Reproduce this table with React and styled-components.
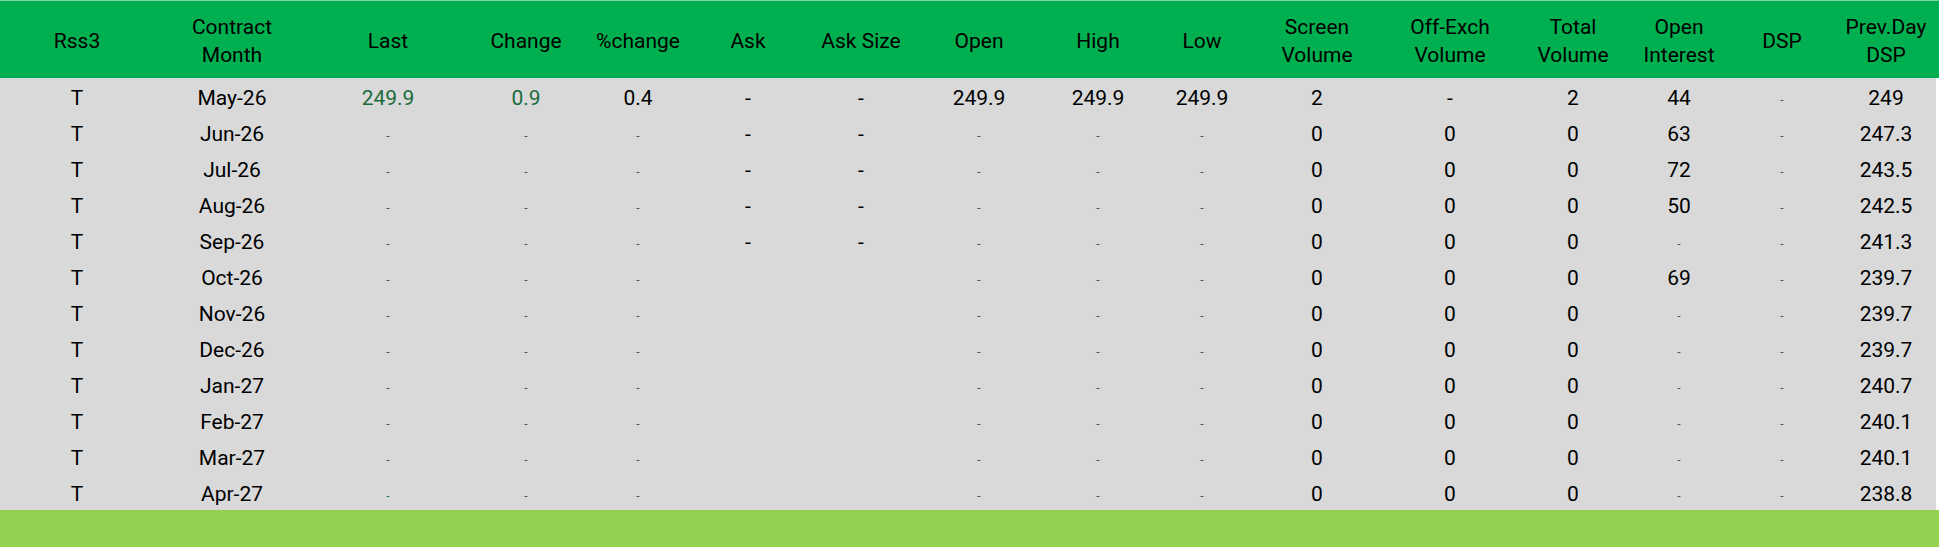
import React from "react";
import styled, { createGlobalStyle } from "styled-components";

const GlobalStyle = createGlobalStyle`
	html, body {
		margin: 0;
		padding: 0;
		background: #ffffff;
	}
	body {
		font-family: Roboto, "Liberation Sans", sans-serif;
		color: #000;
	}
`;

const COLS = "154px 156px 156px 120px 104px 116px 110px 126px 112px 96px 134px 132px 114px 98px 108px 100px";

const Page = styled.div`
	width: 1939px;
	height: 547px;
	display: flex;
	flex-direction: column;
	overflow: hidden;
`;

const Header = styled.div`
	display: grid;
	grid-template-columns: ${COLS} 1fr;
	height: 78px;
	background: #00b050;
	border-top: 1px solid #7fd6a5;
	box-sizing: border-box;
`;

const HeadCell = styled.div`
	display: flex;
	align-items: center;
	justify-content: center;
	text-align: center;
	font-size: 21px;
	line-height: 28px;
	white-space: pre-line;
	padding-top: 2px;
`;

const Body = styled.div`
	width: 1936px;
	background: #d9d9d9;
`;

const Row = styled.div`
	display: grid;
	grid-template-columns: ${COLS};
	height: 36px;
`;

const Cell = styled.div`
	display: flex;
	align-items: center;
	justify-content: center;
	font-size: 21px;
	padding-top: 3px;
	color: ${(p) => (p.$green ? "#1b6b3c" : "#000")};
`;

const Dot = styled.span`
	font-size: 12px;
	line-height: 1;
	padding-top: 4px;
	color: ${(p) => (p.$green ? "#2f7a4a" : "#555")};
`;

const Footer = styled.div`
	flex: 1;
	background: #92d050;
`;

const headers = [
	"Rss3",
	"Contract\nMonth",
	"Last",
	"Change",
	"%change",
	"Ask",
	"Ask Size",
	"Open",
	"High",
	"Low",
	"Screen\nVolume",
	"Off-Exch\nVolume",
	"Total\nVolume",
	"Open\nInterest",
	"DSP",
	"Prev.Day\nDSP",
];

// "." = small grey dash, "" = empty cell
const rows = [
	["T", "May-26", "249.9", "0.9", "0.4", "-", "-", "249.9", "249.9", "249.9", "2", "-", "2", "44", ".", "249"],
	["T", "Jun-26", ".", ".", ".", "-", "-", ".", ".", ".", "0", "0", "0", "63", ".", "247.3"],
	["T", "Jul-26", ".", ".", ".", "-", "-", ".", ".", ".", "0", "0", "0", "72", ".", "243.5"],
	["T", "Aug-26", ".", ".", ".", "-", "-", ".", ".", ".", "0", "0", "0", "50", ".", "242.5"],
	["T", "Sep-26", ".", ".", ".", "-", "-", ".", ".", ".", "0", "0", "0", ".", ".", "241.3"],
	["T", "Oct-26", ".", ".", ".", "", "", ".", ".", ".", "0", "0", "0", "69", ".", "239.7"],
	["T", "Nov-26", ".", ".", ".", "", "", ".", ".", ".", "0", "0", "0", ".", ".", "239.7"],
	["T", "Dec-26", ".", ".", ".", "", "", ".", ".", ".", "0", "0", "0", ".", ".", "239.7"],
	["T", "Jan-27", ".", ".", ".", "", "", ".", ".", ".", "0", "0", "0", ".", ".", "240.7"],
	["T", "Feb-27", ".", ".", ".", "", "", ".", ".", ".", "0", "0", "0", ".", ".", "240.1"],
	["T", "Mar-27", ".", ".", ".", "", "", ".", ".", ".", "0", "0", "0", ".", ".", "240.1"],
	["T", "Apr-27", ".", ".", ".", "", "", ".", ".", ".", "0", "0", "0", ".", ".", "238.8"],
];

const App = () => (
	<>
		<GlobalStyle />
		<Page>
			<Header>
				{headers.map((h) => (
					<HeadCell key={h}>{h}</HeadCell>
				))}
				<div />
			</Header>
			<Body>
				{rows.map((r, i) => (
					<Row key={r[1]}>
						{r.map((v, j) => {
							const green = (j === 2 || j === 3) && v !== ".";
							return (
								<Cell key={j} $green={green}>
									{v === "." ? <Dot $green={i === rows.length - 1 && j === 2}>-</Dot> : v}
								</Cell>
							);
						})}
					</Row>
				))}
			</Body>
			<Footer />
		</Page>
	</>
);

export default App;
